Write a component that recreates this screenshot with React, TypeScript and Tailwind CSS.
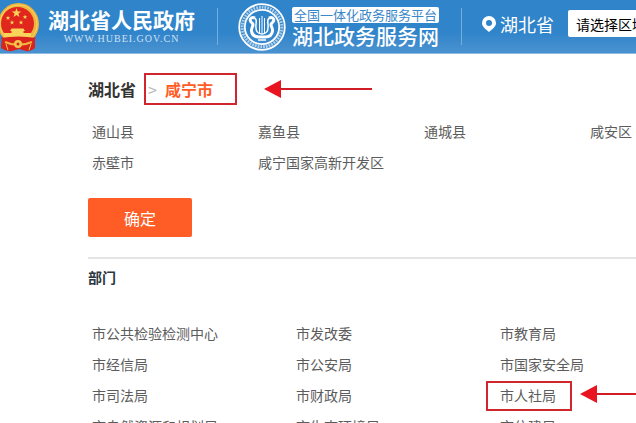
import type { ReactNode } from 'react';

const districts = ['通山县', '嘉鱼县', '通城县', '咸安区', '赤壁市', '咸宁国家高新开发区'];

const departments = [
  '市公共检验检测中心',
  '市发改委',
  '市教育局',
  '市经信局',
  '市公安局',
  '市国家安全局',
  '市司法局',
  '市财政局',
  '市人社局',
  '市自然资源和规划局',
  '市生态环境局',
  '市住建局',
];

const STAR = 'M0 -5 L1.2 -1.6 L4.8 -1.5 L1.9 0.6 L2.9 4 L0 2 L-2.9 4 L-1.9 0.6 L-4.8 -1.5 L-1.2 -1.6 Z';

function Emblem() {
  return (
    <svg viewBox="0 0 42 50" className="h-[50px] w-[42px] shrink-0" aria-hidden="true">
      <path d="M4 33 L3 46 Q8 50 14 49 L21 47 L28 49 Q33 50 37 46 L37 33 Z" fill="#d9231c" />
      <ellipse cx="20.5" cy="22" rx="20.5" ry="21" fill="#efb43c" />
      <ellipse cx="20.5" cy="22" rx="18.5" ry="19" fill="none" stroke="#f8d667" strokeWidth="1" />
      <circle cx="19.5" cy="21.5" r="16.5" fill="#e0261d" />
      <path d={STAR} transform="translate(18.5 11)" fill="#f9d45a" />
      <path d={STAR} transform="translate(10 16) scale(.5)" fill="#f9d45a" />
      <path d={STAR} transform="translate(27 15) scale(.5)" fill="#f9d45a" />
      <path d={STAR} transform="translate(14 20.5) scale(.5)" fill="#f9d45a" />
      <path d={STAR} transform="translate(23 20.5) scale(.5)" fill="#f9d45a" />
      <path d="M12 29 L13.5 26.5 H25.5 L27 29 H25.5 V31 H33 V35 H6 V31 H13.5 V29 Z" fill="#f9d45a" />
      <path d="M3 36 Q20 33 38 36 L33 40 Q20 44 8 40 Z" fill="#d9231c" />
      <path d="M7 40 Q20 46 34 40" fill="none" stroke="#f0b53f" strokeWidth="2" />
      <circle cx="20" cy="42" r="4" fill="#f5c64b" />
      <circle cx="20" cy="42" r="1.5" fill="#d9231c" />
      <path d="M8 42 L10 48 M33 42 L31 48" stroke="#f5c64b" strokeWidth="1" />
    </svg>
  );
}

function Seal() {
  return (
    <svg viewBox="0 0 48 48" className="size-12 shrink-0" fill="none" aria-hidden="true">
      <circle cx="24" cy="24" r="22.8" stroke="#fff" strokeWidth="1.8" />
      <circle cx="24" cy="24" r="19.8" stroke="#fff" strokeWidth="3" strokeDasharray="1.8 1" opacity="0.6" />
      <circle cx="24" cy="24" r="17.2" stroke="#fff" strokeWidth="1.8" />
      <path
        d="M17 15 C12 13 11 18 14 20 C17 22 13 24 13.5 28 C14 32 17 34 21 34 H27 C31 34 34 32 34.5 28 C35 24 31 22 34 20 C37 18 36 13 31 15"
        stroke="#fff"
        strokeWidth="3"
      />
      <path d="M17 15 C20 18 17 21 18 25 C18 28 20 31 24 31 C28 31 30 28 30 25 C31 21 28 18 31 15" stroke="#fff" strokeWidth="1.5" />
      <path d="M21.5 15 V30 M24 13 V30 M26.5 15 V30" stroke="#fff" strokeWidth="1" />
      <path d="M20 37 H28" stroke="#fff" strokeWidth="1.5" />
    </svg>
  );
}

function Pin() {
  return (
    <svg viewBox="0 0 14 16" className="h-4 w-[14px] shrink-0" aria-hidden="true">
      <path
        d="M7 0 A7 7 0 0 0 0 7 C0 11 4 13 7 16 C10 13 14 11 14 7 A7 7 0 0 0 7 0 Z M7 4 A3 3 0 1 1 7 10 A3 3 0 1 1 7 4 Z"
        fill="#fff"
        fillRule="evenodd"
      />
    </svg>
  );
}

function Arrow({ className }: { className: string }) {
  return (
    <svg viewBox="0 0 108 18" className={className} aria-hidden="true">
      <path d="M16 9 H108" stroke="#d01c26" strokeWidth="2" />
      <path d="M0 9 L17 0 V18 Z" fill="#e81420" />
    </svg>
  );
}

function Marked({ children, className }: { children: ReactNode; className: string }) {
  return (
    <span className="relative">
      {children}
      <span className={`pointer-events-none absolute border-2 border-[#cf2630] ${className}`} />
    </span>
  );
}

function Header() {
  return (
    <header className="flex h-[54px] items-center border-b border-[#8db8df] bg-linear-to-b from-[#2f84ca] from-60% to-[#4a92cf] text-white">
      <div className="-ml-0.5 flex shrink-0 items-center gap-2">
        <Emblem />
        <div className="flex flex-col items-center whitespace-nowrap">
          <span className="text-[21px] leading-6 font-bold">湖北省人民政府</span>
          <span className="font-['Liberation_Serif',serif] text-[10px] leading-4 tracking-widest text-[#cfe2f3]">
            WWW.HUBEI.GOV.CN
          </span>
        </div>
      </div>
      <div className="ml-[22px] h-[37px] w-px shrink-0 bg-[#75aedd]" />
      <div className="ml-5 flex shrink-0 items-center gap-1.5">
        <Seal />
        <div className="flex flex-col whitespace-nowrap">
          <span className="rounded-xs bg-white px-0.5 text-center text-[13px] leading-4 text-[#3b87c8]">
            全国一体化政务服务平台
          </span>
          <span className="text-[21px] leading-6 font-medium">湖北政务服务网</span>
        </div>
      </div>
      <div className="ml-[22px] h-[37px] w-px shrink-0 bg-[#75aedd]" />
      <div className="mb-1.5 ml-5 flex shrink-0 items-center gap-1">
        <Pin />
        <span className="text-lg leading-6">湖北省</span>
      </div>
      <select
        aria-label="请选择区域"
        className="mb-1.5 ml-3.5 h-[27px] w-40 shrink-0 appearance-none rounded-xs bg-white pl-2 text-sm text-black"
      >
        <option>请选择区域</option>
      </select>
    </header>
  );
}

export default function App() {
  return (
    <div className="h-screen overflow-hidden bg-white font-['Noto_Sans_CJK_SC',sans-serif] text-sm text-[#5c5c5c]">
      <Header />
      <main className="pt-5 pl-[88px]">
        <div className="relative flex h-[30px] items-center text-base font-bold text-[#333]">
          <h1>湖北省</h1>
          <Marked className="-inset-y-1 -right-6 left-2">
            <span className="pr-2 pl-3 font-normal text-[#bbb]">&gt;</span>
            <span className="text-[#ff5c26]">咸宁市</span>
          </Marked>
          <Arrow className="absolute left-44 h-[18px] w-[108px]" />
        </div>

        <ul className="mt-[11px] grid auto-rows-[31px] grid-cols-[repeat(4,166px)] items-center pl-1 whitespace-nowrap">
          {districts.map((name) => (
            <li key={name}>
              <a href="#">{name}</a>
            </li>
          ))}
        </ul>

        <button type="button" className="mt-[21px] h-[39px] w-[104px] rounded-xs bg-[#ff5c26] text-base text-white">
          确定
        </button>

        <section className="mt-5 border-t-2 border-[#e4e4e4] pt-1.5">
          <h2 className="font-bold leading-6 text-[#2b3640]">部门</h2>
          <ul className="mt-7 grid auto-rows-[31px] grid-cols-[repeat(3,204px)] items-center pl-1 whitespace-nowrap">
            {departments.map((name) => (
              <li key={name}>
                {name === '市人社局' ? (
                  <span className="relative">
                    <Marked className="-top-1 -right-4 -bottom-1.5 -left-3.5">
                      <a href="#">{name}</a>
                    </Marked>
                    <Arrow className="absolute top-0 left-20 h-[18px] w-[108px]" />
                  </span>
                ) : (
                  <a href="#">{name}</a>
                )}
              </li>
            ))}
          </ul>
        </section>
      </main>
    </div>
  );
}
